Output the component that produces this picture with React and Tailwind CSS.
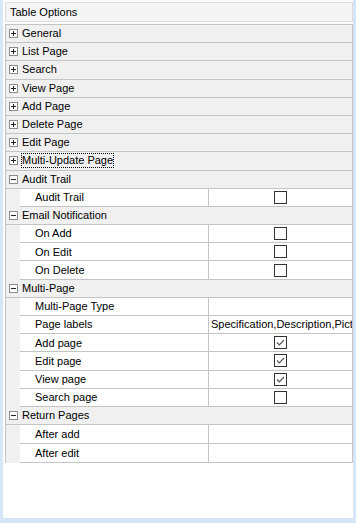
import React from "react";

const rows = [
  { cat: "General" },
  { cat: "List Page" },
  { cat: "Search" },
  { cat: "View Page" },
  { cat: "Add Page" },
  { cat: "Delete Page" },
  { cat: "Edit Page" },
  { cat: "Multi-Update Page", focus: true },
  { cat: "Audit Trail", open: true },
  { name: "Audit Trail", check: false },
  { cat: "Email Notification", open: true },
  { name: "On Add", check: false },
  { name: "On Edit", check: false },
  { name: "On Delete", check: false },
  { cat: "Multi-Page", open: true },
  { name: "Multi-Page Type" },
  { name: "Page labels", value: "Specification,Description,Pictures" },
  { name: "Add page", check: true },
  { name: "Edit page", check: true },
  { name: "View page", check: true },
  { name: "Search page", check: false },
  { cat: "Return Pages", open: true },
  { name: "After add", tall: true },
  { name: "After edit", tall: true },
];

function Expander({ open }) {
  return (
    <svg width="9" height="9" viewBox="0 0 9 9" className="shrink-0">
      <rect x="0.5" y="0.5" width="8" height="8" fill="#fff" stroke="#8c8c8c" />
      <line x1="2" y1="4.5" x2="7" y2="4.5" stroke="#222" />
      {!open && <line x1="4.5" y1="2" x2="4.5" y2="7" stroke="#222" />}
    </svg>
  );
}

function Check({ checked }) {
  return (
    <svg width="13" height="13" viewBox="0 0 13 13">
      <rect x="0.5" y="0.5" width="12" height="12" fill="#fff" stroke="#333" />
      {checked && (
        <path d="M3 6.5 L5.3 8.8 L10 4" fill="none" stroke="#555" strokeWidth="1.2" />
      )}
    </svg>
  );
}

export default function App() {
  return (
    <div
      className="flex h-[523px] w-[356px] flex-col bg-[#d6e6f8] pb-[5px] pl-[3px] pr-[3px] text-[11px] text-black"
      style={{ fontFamily: '"Liberation Sans", Arial, sans-serif' }}
    >
      <div className="flex flex-1 flex-col bg-white pl-[2px] pt-[2px]">

        {/* TITLE */}
        <div className="flex h-[20px] items-center border border-[#dcdcdc] bg-[#f5f5f5] pl-[4px]">
          Table Options
        </div>

        {/* GRID */}
        <div className="mt-[2px] border-x border-t border-[#c4c4c4]">
          {rows.map((r, i) =>
            r.cat ? (
              <div
                key={i}
                className="flex h-[18.2px] items-center border-b border-[#c4c4c4] bg-[#f0f0f0] pl-[3px]"
              >
                <Expander open={r.open} />
                <span
                  className={`ml-[4px] leading-[13px] ${
                    r.focus ? "outline outline-1 outline-dotted outline-black" : ""
                  }`}
                >
                  {r.cat}
                </span>
              </div>
            ) : (
              <div
                key={i}
                className={`flex ${r.tall ? "h-[19px]" : "h-[18.2px]"} bg-[#f0f0f0]`}
              >
                <div className="w-[14px] shrink-0" />
                <div className="flex w-[189px] shrink-0 items-center border-b border-r border-[#c4c4c4] bg-white pl-[15px]">
                  {r.name}
                </div>
                <div className="flex min-w-0 flex-1 items-center justify-center overflow-hidden border-b border-[#c4c4c4] bg-white">
                  {r.check !== undefined && <Check checked={r.check} />}
                  {r.value && (
                    <span className="w-full overflow-hidden whitespace-nowrap pl-[2px]">
                      {r.value}
                    </span>
                  )}
                </div>
              </div>
            )
          )}
        </div>

      </div>
    </div>
  );
}
